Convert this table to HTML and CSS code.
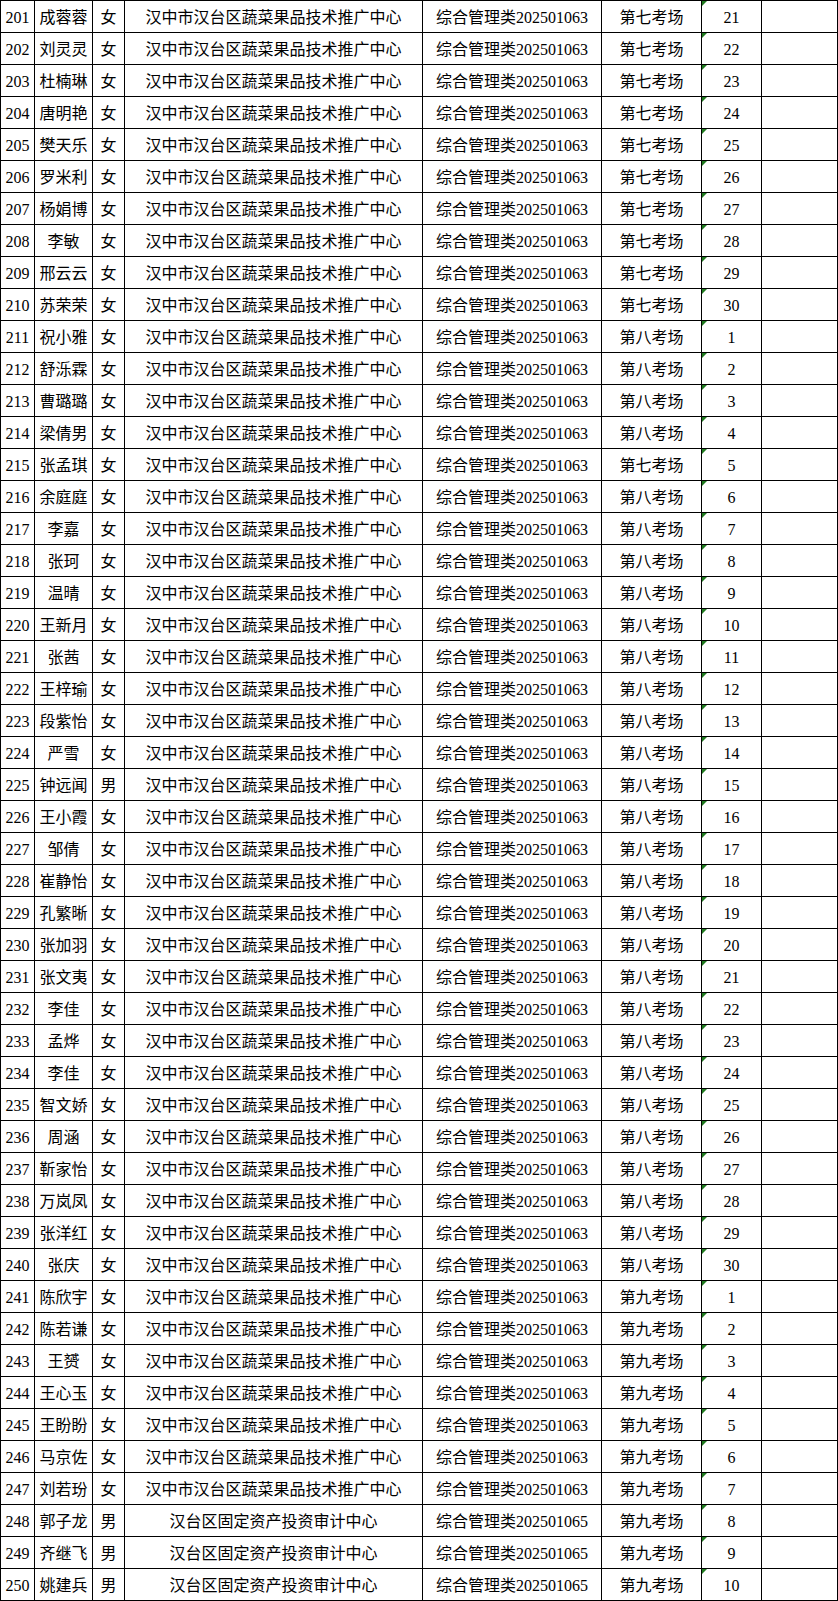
FILE: index.html
```html
<!DOCTYPE html>
<html lang="zh-CN">
<head>
<meta charset="utf-8">
<title>考场安排</title>
<link rel="stylesheet" href="styles.css">
</head>
<body>
<table class="roster">
<colgroup>
<col class="c-no"><col class="c-name"><col class="c-sex"><col class="c-unit"><col class="c-post"><col class="c-room"><col class="c-seat"><col class="c-note">
</colgroup>
<tbody>
<tr><td>201</td><td>成蓉蓉</td><td>女</td><td>汉中市汉台区蔬菜果品技术推广中心</td><td>综合管理类202501063</td><td>第七考场</td><td class="seat">21</td><td></td></tr>
<tr><td>202</td><td>刘灵灵</td><td>女</td><td>汉中市汉台区蔬菜果品技术推广中心</td><td>综合管理类202501063</td><td>第七考场</td><td class="seat">22</td><td></td></tr>
<tr><td>203</td><td>杜楠琳</td><td>女</td><td>汉中市汉台区蔬菜果品技术推广中心</td><td>综合管理类202501063</td><td>第七考场</td><td class="seat">23</td><td></td></tr>
<tr><td>204</td><td>唐明艳</td><td>女</td><td>汉中市汉台区蔬菜果品技术推广中心</td><td>综合管理类202501063</td><td>第七考场</td><td class="seat">24</td><td></td></tr>
<tr><td>205</td><td>樊天乐</td><td>女</td><td>汉中市汉台区蔬菜果品技术推广中心</td><td>综合管理类202501063</td><td>第七考场</td><td class="seat">25</td><td></td></tr>
<tr><td>206</td><td>罗米利</td><td>女</td><td>汉中市汉台区蔬菜果品技术推广中心</td><td>综合管理类202501063</td><td>第七考场</td><td class="seat">26</td><td></td></tr>
<tr><td>207</td><td>杨娟博</td><td>女</td><td>汉中市汉台区蔬菜果品技术推广中心</td><td>综合管理类202501063</td><td>第七考场</td><td class="seat">27</td><td></td></tr>
<tr><td>208</td><td>李敏</td><td>女</td><td>汉中市汉台区蔬菜果品技术推广中心</td><td>综合管理类202501063</td><td>第七考场</td><td class="seat">28</td><td></td></tr>
<tr><td>209</td><td>邢云云</td><td>女</td><td>汉中市汉台区蔬菜果品技术推广中心</td><td>综合管理类202501063</td><td>第七考场</td><td class="seat">29</td><td></td></tr>
<tr><td>210</td><td>苏荣荣</td><td>女</td><td>汉中市汉台区蔬菜果品技术推广中心</td><td>综合管理类202501063</td><td>第七考场</td><td class="seat">30</td><td></td></tr>
<tr><td>211</td><td>祝小雅</td><td>女</td><td>汉中市汉台区蔬菜果品技术推广中心</td><td>综合管理类202501063</td><td>第八考场</td><td class="seat">1</td><td></td></tr>
<tr><td>212</td><td>舒泺霖</td><td>女</td><td>汉中市汉台区蔬菜果品技术推广中心</td><td>综合管理类202501063</td><td>第八考场</td><td class="seat">2</td><td></td></tr>
<tr><td>213</td><td>曹璐璐</td><td>女</td><td>汉中市汉台区蔬菜果品技术推广中心</td><td>综合管理类202501063</td><td>第八考场</td><td class="seat">3</td><td></td></tr>
<tr><td>214</td><td>梁倩男</td><td>女</td><td>汉中市汉台区蔬菜果品技术推广中心</td><td>综合管理类202501063</td><td>第八考场</td><td class="seat">4</td><td></td></tr>
<tr><td>215</td><td>张孟琪</td><td>女</td><td>汉中市汉台区蔬菜果品技术推广中心</td><td>综合管理类202501063</td><td>第七考场</td><td class="seat">5</td><td></td></tr>
<tr><td>216</td><td>余庭庭</td><td>女</td><td>汉中市汉台区蔬菜果品技术推广中心</td><td>综合管理类202501063</td><td>第八考场</td><td class="seat">6</td><td></td></tr>
<tr><td>217</td><td>李嘉</td><td>女</td><td>汉中市汉台区蔬菜果品技术推广中心</td><td>综合管理类202501063</td><td>第八考场</td><td class="seat">7</td><td></td></tr>
<tr><td>218</td><td>张珂</td><td>女</td><td>汉中市汉台区蔬菜果品技术推广中心</td><td>综合管理类202501063</td><td>第八考场</td><td class="seat">8</td><td></td></tr>
<tr><td>219</td><td>温晴</td><td>女</td><td>汉中市汉台区蔬菜果品技术推广中心</td><td>综合管理类202501063</td><td>第八考场</td><td class="seat">9</td><td></td></tr>
<tr><td>220</td><td>王新月</td><td>女</td><td>汉中市汉台区蔬菜果品技术推广中心</td><td>综合管理类202501063</td><td>第八考场</td><td class="seat">10</td><td></td></tr>
<tr><td>221</td><td>张茜</td><td>女</td><td>汉中市汉台区蔬菜果品技术推广中心</td><td>综合管理类202501063</td><td>第八考场</td><td class="seat">11</td><td></td></tr>
<tr><td>222</td><td>王梓瑜</td><td>女</td><td>汉中市汉台区蔬菜果品技术推广中心</td><td>综合管理类202501063</td><td>第八考场</td><td class="seat">12</td><td></td></tr>
<tr><td>223</td><td>段紫怡</td><td>女</td><td>汉中市汉台区蔬菜果品技术推广中心</td><td>综合管理类202501063</td><td>第八考场</td><td class="seat">13</td><td></td></tr>
<tr><td>224</td><td>严雪</td><td>女</td><td>汉中市汉台区蔬菜果品技术推广中心</td><td>综合管理类202501063</td><td>第八考场</td><td class="seat">14</td><td></td></tr>
<tr><td>225</td><td>钟远闻</td><td>男</td><td>汉中市汉台区蔬菜果品技术推广中心</td><td>综合管理类202501063</td><td>第八考场</td><td class="seat">15</td><td></td></tr>
<tr><td>226</td><td>王小霞</td><td>女</td><td>汉中市汉台区蔬菜果品技术推广中心</td><td>综合管理类202501063</td><td>第八考场</td><td class="seat">16</td><td></td></tr>
<tr><td>227</td><td>邹倩</td><td>女</td><td>汉中市汉台区蔬菜果品技术推广中心</td><td>综合管理类202501063</td><td>第八考场</td><td class="seat">17</td><td></td></tr>
<tr><td>228</td><td>崔静怡</td><td>女</td><td>汉中市汉台区蔬菜果品技术推广中心</td><td>综合管理类202501063</td><td>第八考场</td><td class="seat">18</td><td></td></tr>
<tr><td>229</td><td>孔繁晰</td><td>女</td><td>汉中市汉台区蔬菜果品技术推广中心</td><td>综合管理类202501063</td><td>第八考场</td><td class="seat">19</td><td></td></tr>
<tr><td>230</td><td>张加羽</td><td>女</td><td>汉中市汉台区蔬菜果品技术推广中心</td><td>综合管理类202501063</td><td>第八考场</td><td class="seat">20</td><td></td></tr>
<tr><td>231</td><td>张文夷</td><td>女</td><td>汉中市汉台区蔬菜果品技术推广中心</td><td>综合管理类202501063</td><td>第八考场</td><td class="seat">21</td><td></td></tr>
<tr><td>232</td><td>李佳</td><td>女</td><td>汉中市汉台区蔬菜果品技术推广中心</td><td>综合管理类202501063</td><td>第八考场</td><td class="seat">22</td><td></td></tr>
<tr><td>233</td><td>孟烨</td><td>女</td><td>汉中市汉台区蔬菜果品技术推广中心</td><td>综合管理类202501063</td><td>第八考场</td><td class="seat">23</td><td></td></tr>
<tr><td>234</td><td>李佳</td><td>女</td><td>汉中市汉台区蔬菜果品技术推广中心</td><td>综合管理类202501063</td><td>第八考场</td><td class="seat">24</td><td></td></tr>
<tr><td>235</td><td>智文娇</td><td>女</td><td>汉中市汉台区蔬菜果品技术推广中心</td><td>综合管理类202501063</td><td>第八考场</td><td class="seat">25</td><td></td></tr>
<tr><td>236</td><td>周涵</td><td>女</td><td>汉中市汉台区蔬菜果品技术推广中心</td><td>综合管理类202501063</td><td>第八考场</td><td class="seat">26</td><td></td></tr>
<tr><td>237</td><td>靳家怡</td><td>女</td><td>汉中市汉台区蔬菜果品技术推广中心</td><td>综合管理类202501063</td><td>第八考场</td><td class="seat">27</td><td></td></tr>
<tr><td>238</td><td>万岚凤</td><td>女</td><td>汉中市汉台区蔬菜果品技术推广中心</td><td>综合管理类202501063</td><td>第八考场</td><td class="seat">28</td><td></td></tr>
<tr><td>239</td><td>张洋红</td><td>女</td><td>汉中市汉台区蔬菜果品技术推广中心</td><td>综合管理类202501063</td><td>第八考场</td><td class="seat">29</td><td></td></tr>
<tr><td>240</td><td>张庆</td><td>女</td><td>汉中市汉台区蔬菜果品技术推广中心</td><td>综合管理类202501063</td><td>第八考场</td><td class="seat">30</td><td></td></tr>
<tr><td>241</td><td>陈欣宇</td><td>女</td><td>汉中市汉台区蔬菜果品技术推广中心</td><td>综合管理类202501063</td><td>第九考场</td><td class="seat">1</td><td></td></tr>
<tr><td>242</td><td>陈若谦</td><td>女</td><td>汉中市汉台区蔬菜果品技术推广中心</td><td>综合管理类202501063</td><td>第九考场</td><td class="seat">2</td><td></td></tr>
<tr><td>243</td><td>王赟</td><td>女</td><td>汉中市汉台区蔬菜果品技术推广中心</td><td>综合管理类202501063</td><td>第九考场</td><td class="seat">3</td><td></td></tr>
<tr><td>244</td><td>王心玉</td><td>女</td><td>汉中市汉台区蔬菜果品技术推广中心</td><td>综合管理类202501063</td><td>第九考场</td><td class="seat">4</td><td></td></tr>
<tr><td>245</td><td>王盼盼</td><td>女</td><td>汉中市汉台区蔬菜果品技术推广中心</td><td>综合管理类202501063</td><td>第九考场</td><td class="seat">5</td><td></td></tr>
<tr><td>246</td><td>马京佐</td><td>女</td><td>汉中市汉台区蔬菜果品技术推广中心</td><td>综合管理类202501063</td><td>第九考场</td><td class="seat">6</td><td></td></tr>
<tr><td>247</td><td>刘若玢</td><td>女</td><td>汉中市汉台区蔬菜果品技术推广中心</td><td>综合管理类202501063</td><td>第九考场</td><td class="seat">7</td><td></td></tr>
<tr><td>248</td><td>郭子龙</td><td>男</td><td>汉台区固定资产投资审计中心</td><td>综合管理类202501065</td><td>第九考场</td><td class="seat">8</td><td></td></tr>
<tr><td>249</td><td>齐继飞</td><td>男</td><td>汉台区固定资产投资审计中心</td><td>综合管理类202501065</td><td>第九考场</td><td class="seat">9</td><td></td></tr>
<tr><td>250</td><td>姚建兵</td><td>男</td><td>汉台区固定资产投资审计中心</td><td>综合管理类202501065</td><td>第九考场</td><td class="seat">10</td><td></td></tr>
</tbody>
</table>
</body>
</html>
```

FILE: styles.css
```css
html, body {
  margin: 0;
  padding: 0;
  background: #ffffff;
}

.roster {
  table-layout: fixed;
  border-collapse: separate;
  border-spacing: 1px;
  background: #000000;
  width: 838px;
  font-family: "Liberation Serif", "Noto Sans CJK SC", serif;
  font-size: 16px;
  color: #000000;
}

.roster td {
  background: #ffffff;
  height: 31px;
  padding: 2px 0 0 0;
  box-sizing: border-box;
  line-height: 20px;
  text-align: center;
  vertical-align: middle;
  white-space: nowrap;
  overflow: hidden;
}

.c-no { width: 33px; }
.c-name { width: 57px; }
.c-sex { width: 31px; }
.c-unit { width: 297px; }
.c-post { width: 178px; }
.c-room { width: 99px; }
.c-seat { width: 59px; }
.c-note { width: 75px; }

.roster td.seat {
  position: relative;
}

.roster td.seat::before {
  content: "";
  position: absolute;
  left: 0;
  top: 0;
  width: 0;
  height: 0;
  border-top: 5px solid #1f7a1f;
  border-right: 5px solid transparent;
}
```
